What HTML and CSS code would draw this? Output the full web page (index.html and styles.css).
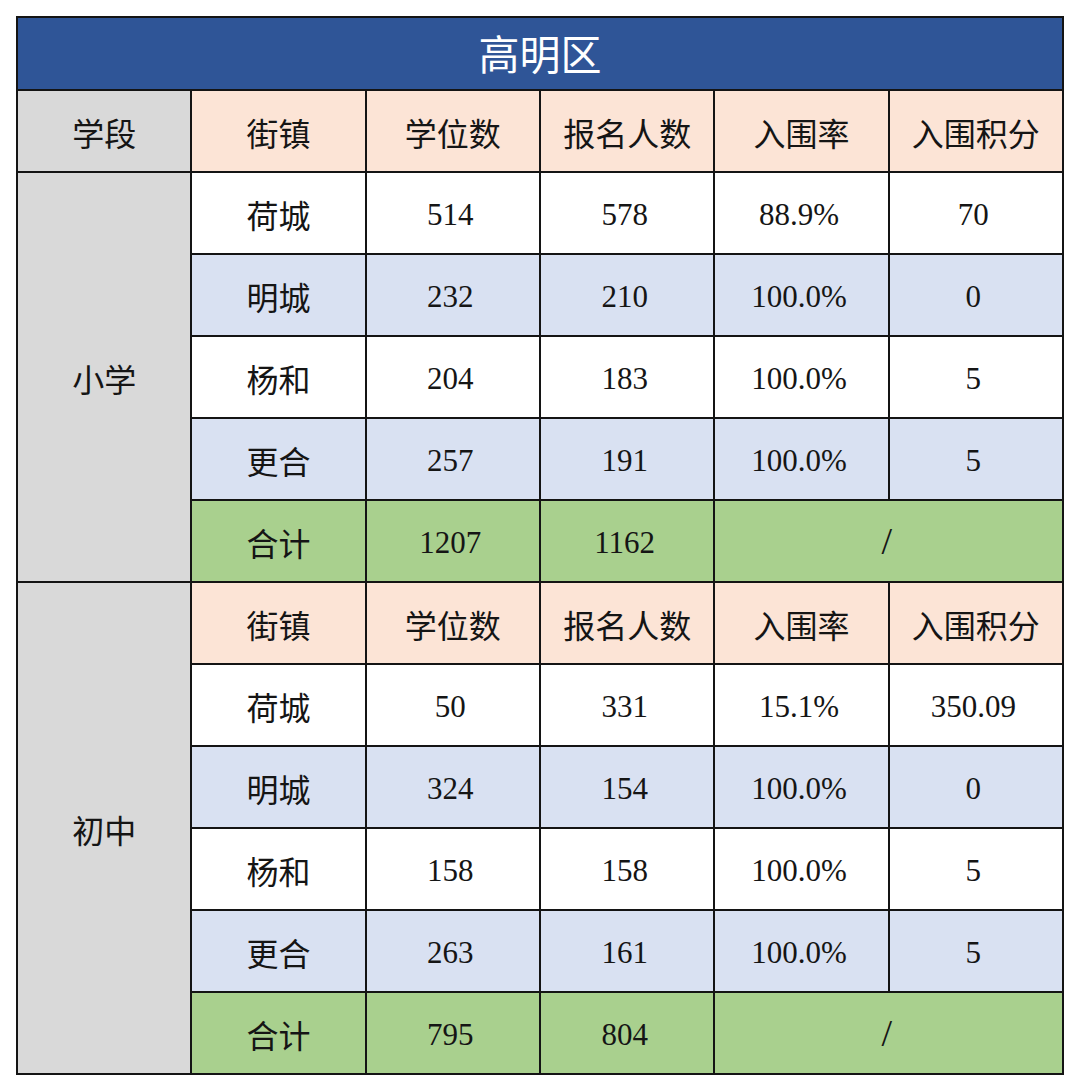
FILE: index.html
```html
<!DOCTYPE html>
<html lang="zh-CN">
<head>
<meta charset="utf-8">
<title>高明区</title>
<link rel="stylesheet" href="styles.css">
</head>
<body>
<div class="sheet">
  <div class="c title">高明区</div>

  <div class="c gray">学段</div>
  <div class="c peach">街镇</div>
  <div class="c peach">学位数</div>
  <div class="c peach">报名人数</div>
  <div class="c peach">入围率</div>
  <div class="c peach">入围积分</div>

  <div class="c gray span5">小学</div>
  <div class="c white">荷城</div><div class="c white num">514</div><div class="c white num">578</div><div class="c white num">88.9%</div><div class="c white num">70</div>
  <div class="c blue">明城</div><div class="c blue num">232</div><div class="c blue num">210</div><div class="c blue num">100.0%</div><div class="c blue num">0</div>
  <div class="c white">杨和</div><div class="c white num">204</div><div class="c white num">183</div><div class="c white num">100.0%</div><div class="c white num">5</div>
  <div class="c blue">更合</div><div class="c blue num">257</div><div class="c blue num">191</div><div class="c blue num">100.0%</div><div class="c blue num">5</div>
  <div class="c green">合计</div><div class="c green num">1207</div><div class="c green num">1162</div><div class="c green num slash span2">/</div>

  <div class="c gray span6">初中</div>
  <div class="c peach">街镇</div>
  <div class="c peach">学位数</div>
  <div class="c peach">报名人数</div>
  <div class="c peach">入围率</div>
  <div class="c peach">入围积分</div>
  <div class="c white">荷城</div><div class="c white num">50</div><div class="c white num">331</div><div class="c white num">15.1%</div><div class="c white num">350.09</div>
  <div class="c blue">明城</div><div class="c blue num">324</div><div class="c blue num">154</div><div class="c blue num">100.0%</div><div class="c blue num">0</div>
  <div class="c white">杨和</div><div class="c white num">158</div><div class="c white num">158</div><div class="c white num">100.0%</div><div class="c white num">5</div>
  <div class="c blue">更合</div><div class="c blue num">263</div><div class="c blue num">161</div><div class="c blue num">100.0%</div><div class="c blue num">5</div>
  <div class="c green">合计</div><div class="c green num">795</div><div class="c green num">804</div><div class="c green num slash span2">/</div>
</div>
</body>
</html>
```
FILE: styles.css
```css
html, body {
  margin: 0;
  padding: 0;
  background: #ffffff;
}
body {
  padding: 16px 0 0 16px;
}
.sheet {
  width: 1048px;
  box-sizing: border-box;
  display: grid;
  grid-template-columns: repeat(6, 1fr);
  grid-template-rows: 71px repeat(12, 80px);
  gap: 2px;
  padding: 2px;
  background: #141414;
  font-family: "Liberation Serif", "Noto Sans CJK SC", serif;
  color: #151515;
}
.c {
  display: flex;
  align-items: center;
  justify-content: center;
  font-size: 32px;
  line-height: 1;
  padding-top: 8px;
  box-sizing: border-box;
}
.num {
  font-size: 31px;
  padding-top: 2px;
  padding-right: 5px;
}
.slash {
  font-size: 38px;
  padding-top: 0;
  padding-right: 4px;
}
.title {
  grid-column: 1 / -1;
  background: #2f5597;
  color: #ffffff;
  font-size: 41px;
  padding-top: 6px;
}
.gray { background: #d9d9d9; }
.peach { background: #fce4d6; }
.white { background: #ffffff; }
.blue { background: #d9e1f2; }
.green { background: #a9d08e; }
.span5 { grid-row: span 5; }
.span6 { grid-row: span 6; }
.span2 { grid-column: span 2; }
```
